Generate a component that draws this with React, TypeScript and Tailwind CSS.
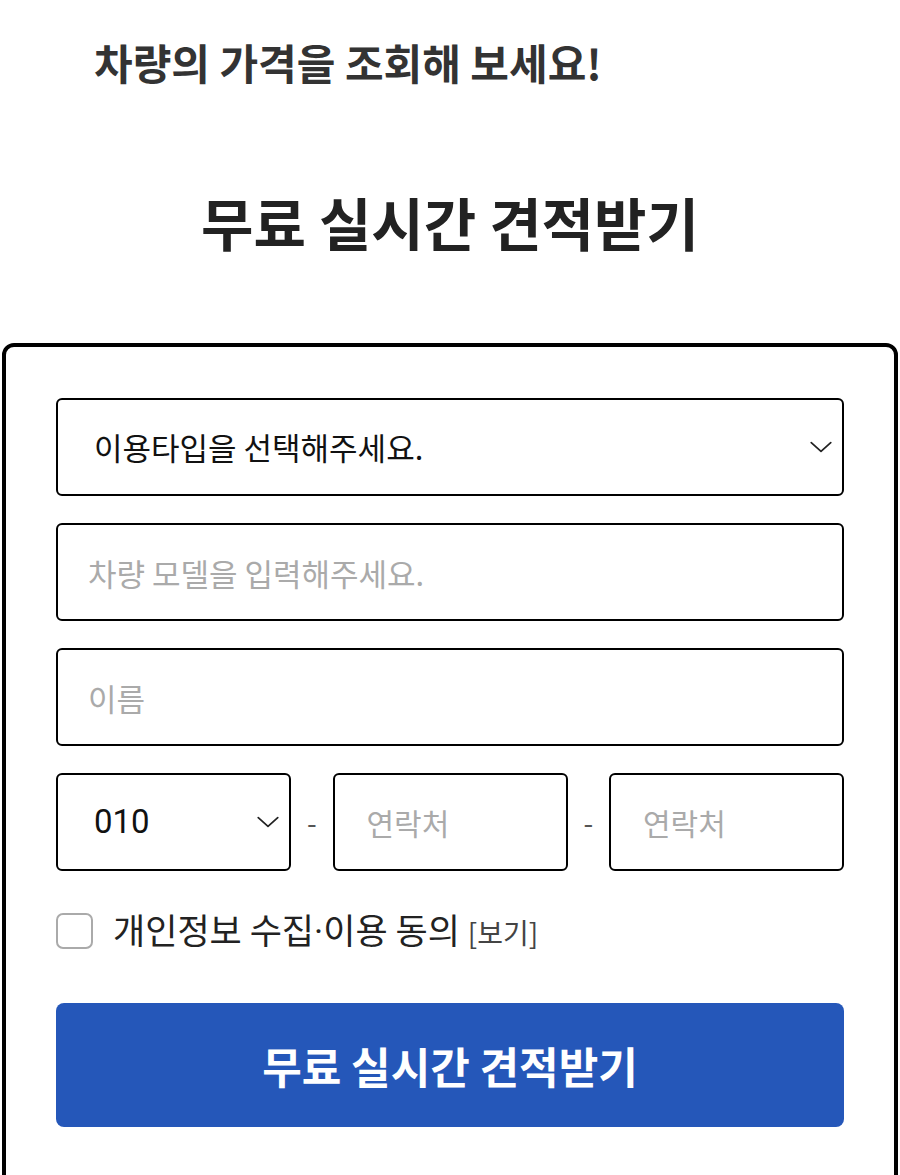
import { useState } from 'react';

function Chevron({ className }: { className?: string }) {
  return (
    <svg viewBox="0 0 24 24" className={className} fill="none" stroke="currentColor" strokeWidth="1.6" strokeLinecap="round" strokeLinejoin="round">
      <path d="M3 8l9 8 9-8" />
    </svg>
  );
}

const font = { fontFamily: '"Noto Sans CJK KR", "Noto Sans", sans-serif' };

export default function App() {
  const [agree, setAgree] = useState(false);

  return (
    <div className="w-[900px] h-[1175px] overflow-hidden bg-white text-[#222]" style={font}>
      <h2 className="pl-[94px] pt-[34px] text-[42px] font-bold leading-[56px] text-[#333]">
        차량의 가격을 조회해 보세요!
      </h2>

      <h1 className="mt-[93px] text-center text-[57px] font-bold leading-[76px] text-[#222]">
        무료 실시간 견적받기
      </h1>

      <div className="mt-[84px] mx-[2px] border-[4px] border-black rounded-[12px] px-[50px] pt-[51px] pb-[60px]">
        <div className="flex flex-col gap-[27px]">
          <div className="relative h-[98px] border-2 border-black rounded-[6px] flex items-center pl-[36px] pr-[16px]">
            <span className="text-[31px] text-[#111]">이용타입을 선택해주세요.</span>
            <Chevron className="absolute right-[8px] top-1/2 -translate-y-1/2 w-[26px] h-[26px] text-[#222]" />
          </div>

          <input
            className="h-[98px] border-2 border-black rounded-[6px] pl-[30px] text-[31px] placeholder:text-[#aaa] outline-none"
            placeholder="차량 모델을 입력해주세요."
          />

          <input
            className="h-[98px] border-2 border-black rounded-[6px] pl-[30px] text-[31px] placeholder:text-[#aaa] outline-none"
            placeholder="이름"
          />

          <div className="flex items-center">
            <div className="relative w-[235px] h-[98px] border-2 border-black rounded-[6px] flex items-center pl-[36px]">
              <span className="text-[33px] text-[#111]" style={{ fontFamily: 'Roboto, "Noto Sans", sans-serif' }}>010</span>
              <Chevron className="absolute right-[8px] top-1/2 -translate-y-1/2 w-[26px] h-[26px] text-[#222]" />
            </div>
            <span className="flex-1 text-center text-[28px] text-[#555]">-</span>
            <input
              className="w-[235px] h-[98px] border-2 border-black rounded-[6px] pl-[32px] text-[30px] placeholder:text-[#aaa] outline-none"
              placeholder="연락처"
            />
            <span className="flex-1 text-center text-[28px] text-[#555]">-</span>
            <input
              className="w-[235px] h-[98px] border-2 border-black rounded-[6px] pl-[32px] text-[30px] placeholder:text-[#aaa] outline-none"
              placeholder="연락처"
            />
          </div>
        </div>

        <label className="mt-[36px] flex items-center cursor-pointer">
          <button
            type="button"
            onClick={() => setAgree(!agree)}
            className="w-[37px] h-[36px] border-2 border-[#aaa] rounded-[7px] bg-white"
          >
            {agree && <span className="block text-[#2557b9]">✓</span>}
          </button>
          <span className="ml-[20px] text-[35px] leading-[44px] text-[#222]">
            개인정보 수집<span className="font-['Roboto',sans-serif]">·</span>이용 동의{' '}
            <span className="text-[28px] text-[#444]">[보기]</span>
          </span>
        </label>

        <button
          type="button"
          className="mt-[48px] w-full h-[124px] rounded-[8px] bg-[#2557b9] text-white text-[43px] font-bold"
        >
          무료 실시간 견적받기
        </button>
      </div>
    </div>
  );
}
